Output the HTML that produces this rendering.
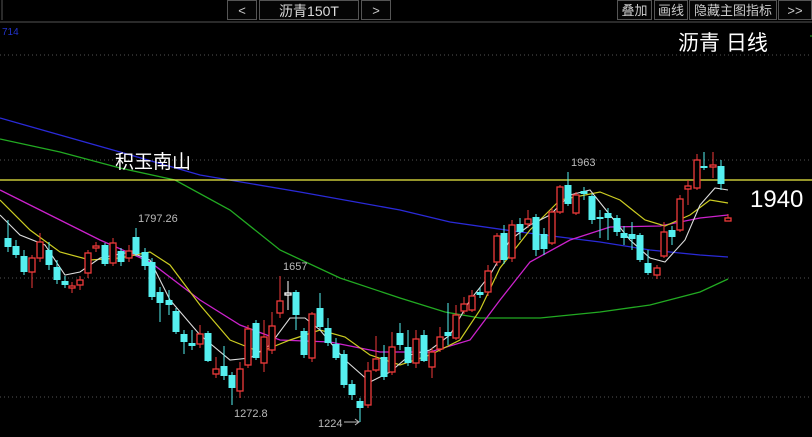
<!DOCTYPE html><html><head><meta charset="utf-8"><style>
body{margin:0;background:#000;width:812px;height:437px;overflow:hidden;font-family:"Liberation Sans","Noto Sans CJK SC",sans-serif}
.b{position:absolute;top:0;height:20px;border:1px solid #555;color:#ccc;font-size:13px;line-height:20px;text-align:center;box-sizing:border-box;background:#050505}
</style></head><body>
<div class="b" style="left:227px;width:30px">&lt;</div>
<div class="b" style="left:259px;width:100px;font-size:14px;color:#ddd">沥青150T</div>
<div class="b" style="left:361px;width:30px">&gt;</div>
<div class="b" style="left:617px;width:35px">叠加</div>
<div class="b" style="left:654px;width:34px">画线</div>
<div class="b" style="left:689px;width:88px">隐藏主图指标</div>
<div class="b" style="left:778px;width:34px">&gt;&gt;</div>
<svg id="s" width="812" height="437" style="position:absolute;left:0;top:0">
<line x1="0" y1="22" x2="812" y2="22" stroke="#555"/>
<line x1="2" y1="0" x2="2" y2="20" stroke="#555"/>
<g stroke="#555" stroke-dasharray="1,3"><line x1="0" y1="55" x2="812" y2="55"/><line x1="0" y1="160" x2="812" y2="160"/><line x1="0" y1="278" x2="812" y2="278"/><line x1="0" y1="397" x2="812" y2="397"/></g>
<text x="2" y="35" fill="#2233cc" font-size="10">714</text>
<polyline fill="none" stroke="#2a2ad8" stroke-width="1.3" points="0,118 60,135 120,152 200,175 300,192 400,210 450,222 520,232 600,242 650,250 700,255 728,257"/>
<polyline fill="none" stroke="#22aa22" stroke-width="1.3" points="0,139 60,152 120,168 175,180 230,210 280,250 340,278 400,298 445,312 480,318 540,318 600,312 650,305 700,292 728,279"/>
<polyline fill="none" stroke="#cc22cc" stroke-width="1.3" points="0,190 40,210 100,240 150,262 200,300 240,325 280,340 330,342 380,352 430,352 470,340 500,300 530,262 570,240 610,227 660,226 700,218 728,215"/>
<polyline fill="none" stroke="#cccc22" stroke-width="1.2" points="0,200 30,230 60,252 90,260 120,258 150,252 170,265 200,305 230,340 260,352 290,340 320,330 345,337 370,355 400,365 430,355 460,340 480,310 500,268 530,230 560,200 600,192 620,200 645,220 665,226 690,215 710,200 728,203"/>
<polyline fill="none" stroke="#dddddd" stroke-width="1.1" points="0,215 20,235 45,245 65,275 80,272 100,258 130,252 150,260 170,300 200,335 230,360 250,358 270,345 290,318 305,318 320,330 345,360 370,382 390,372 410,355 430,350 450,335 470,300 490,275 510,240 530,225 550,215 570,195 590,190 610,215 630,240 650,258 665,262 685,240 700,205 715,188 728,190"/>
<line x1="0" y1="180" x2="812" y2="180" stroke="#eeee44" stroke-width="1.3"/>
<g id="c"></g>
<g font-size="11" fill="#bbb"><text x="138" y="222">1797.26</text><text x="283" y="270">1657</text><text x="234" y="417">1272.8</text><text x="318" y="427">1224</text><text x="571" y="166">1963</text></g>
<line x1="344" y1="422" x2="358" y2="422" stroke="#bbb"/><path d="M355,419 L359,422 L355,425" stroke="#bbb" fill="none"/>
<text x="115" y="168" fill="#fff" font-size="19">积玉南山</text>
<text x="678" y="50" fill="#fff" font-size="21">沥青 日线</text>
<text x="750" y="207" fill="#fff" font-size="24">1940</text>
<line x1="810" y1="36" x2="812" y2="36" stroke="#2a2"/>
</svg>
<script>
var d=[[8,238,247,220,252,'c'],[16,246,255,240,258,'c'],[24,256,272,250,275,'c'],[32,258,272,255,288,'r'],[40,242,258,233,262,'r'],[49,250,265,242,270,'c'],[57,267,280,260,284,'c'],[65,281,285,276,288,'c'],[72,286,288,282,293,'r'],[80,280,285,276,290,'r'],[88,253,273,250,278,'r'],[96,246,248,242,252,'r'],[105,245,264,243,266,'c'],[113,243,263,238,266,'r'],[121,251,262,248,266,'c'],[129,251,258,245,262,'r'],[136,237,254,228,256,'c'],[145,252,266,248,270,'c'],[152,262,297,258,300,'c'],[160,292,303,287,322,'c'],[169,300,305,290,315,'c'],[176,311,332,308,334,'c'],[184,334,342,330,354,'c'],[192,343,346,330,350,'c'],[200,334,344,325,348,'r'],[208,333,361,331,362,'c'],[216,369,374,357,378,'r'],[224,366,376,346,380,'c'],[232,375,388,372,405,'c'],[240,369,391,362,398,'r'],[248,329,365,325,368,'r'],[256,323,358,320,360,'c'],[264,337,363,320,372,'r'],[272,326,350,312,354,'r'],[280,301,313,276,318,'r'],[288,293,295,281,310,'w'],[296,292,315,290,330,'c'],[304,331,355,328,358,'c'],[312,314,358,312,362,'r'],[320,308,327,293,330,'c'],[328,328,343,318,346,'c'],[336,344,358,338,360,'c'],[344,354,385,350,388,'c'],[352,384,395,380,400,'c'],[360,401,408,398,422,'c'],[368,371,405,362,408,'r'],[376,359,370,336,372,'r'],[384,357,377,345,380,'c'],[392,347,372,332,375,'r'],[400,333,345,323,350,'c'],[408,347,363,330,366,'c'],[416,339,363,330,368,'r'],[424,335,361,330,362,'c'],[432,352,367,348,378,'r'],[440,337,349,327,352,'r'],[448,332,336,303,345,'c'],[456,315,338,305,340,'r'],[464,304,311,297,314,'r'],[472,296,310,290,312,'r'],[480,292,295,288,298,'c'],[488,271,292,265,296,'r'],[497,236,262,233,266,'r'],[504,233,260,225,264,'c'],[512,225,258,220,262,'r'],[520,224,232,218,240,'c'],[528,219,224,210,228,'r'],[536,217,250,214,256,'c'],[544,234,249,228,255,'c'],[552,212,243,208,245,'r'],[560,187,212,185,214,'r'],[568,185,204,172,206,'c'],[576,195,213,192,215,'r'],[584,191,194,187,200,'c'],[592,196,220,194,224,'c'],[600,217,219,210,238,'c'],[608,213,218,208,240,'c'],[617,218,232,215,236,'c'],[624,233,238,226,245,'c'],[632,234,239,222,250,'c'],[640,235,260,233,262,'c'],[648,263,273,250,275,'c'],[657,268,275,265,279,'r'],[664,232,256,222,258,'r'],[672,230,237,226,245,'c'],[680,199,230,195,232,'r'],[688,186,189,180,205,'r'],[697,160,188,154,190,'r'],[704,166,168,152,170,'c'],[713,165,167,152,178,'r'],[721,166,184,160,190,'c'],[728,218,221,214,221,'r']];
var g='';d.forEach(function(a){var col=a[5]=='r'?'#f03a3a':a[5]=='w'?'#ffffff':'#55f0f0';g+='<line x1="'+a[0]+'" y1="'+a[3]+'" x2="'+a[0]+'" y2="'+a[4]+'" stroke="'+col+'"/>';var h=Math.max(1,a[2]-a[1]);if(a[5]=='c')g+='<rect x="'+(a[0]-3.5)+'" y="'+a[1]+'" width="7" height="'+h+'" fill="'+col+'"/>';else g+='<rect x="'+(a[0]-3)+'" y="'+a[1]+'" width="6" height="'+h+'" fill="#000" stroke="'+col+'" stroke-width="1.3"/>';});
document.getElementById('c').innerHTML=g;
</script>
</body></html>
